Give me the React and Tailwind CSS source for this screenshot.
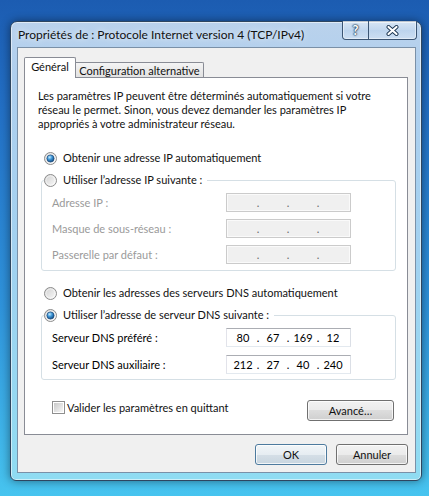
import React from "react";

const F = "font-['Lato','Noto_Sans',sans-serif]";

function Radio({ checked }) {
  return (
    <svg width="13" height="13" viewBox="0 0 13 13" className="shrink-0">
      <defs>
        <linearGradient id="rbg" x1="0" y1="0" x2="1" y2="1">
          <stop offset="0" stopColor="#cfcfcf" />
          <stop offset="1" stopColor="#fbfbfb" />
        </linearGradient>
        <radialGradient id="rdot" cx="0.38" cy="0.32" r="0.75">
          <stop offset="0" stopColor="#c4ecff" />
          <stop offset="0.45" stopColor="#3c94d6" />
          <stop offset="1" stopColor="#0f3f72" />
        </radialGradient>
      </defs>
      <circle cx="6.5" cy="6.5" r="6" fill="url(#rbg)" stroke="#8c8c8c" strokeWidth="1" />
      <circle cx="6.5" cy="6.5" r="4.6" fill="none" stroke="#ffffff" strokeOpacity="0.55" strokeWidth="1" />
      {checked && <circle cx="6.5" cy="6.5" r="3.6" fill="url(#rdot)" stroke="#1a4a7c" strokeWidth="0.7" />}
    </svg>
  );
}

function CheckBox() {
  return (
    <div className="h-[13px] w-[13px] shrink-0 border border-[#8f8f8f] bg-white p-px">
      <div className="h-full w-full bg-[linear-gradient(135deg,#c9c9c9,#f7f7f7)]" />
    </div>
  );
}

function IpField({ values, disabled }) {
  return (
    <div
      className={`flex h-[19px] w-[125px] shrink-0 items-center border pl-[2px] ${
        disabled
          ? "border-[#cbcbcb] bg-[#f0f0f0] text-[#6a6a6a] shadow-[inset_0_0_0_1px_#fafafa]"
          : "border-[#abadb3] border-b-[#e3e9ef] border-l-[#e2e3ea] border-r-[#dbdfe6] bg-white text-black"
      }`}
    >
      {[0, 1, 2, 3].map((i) => (
        <React.Fragment key={i}>
          {i > 0 && <span className="flex w-[2px] justify-center">.</span>}
          <span className="w-[28px] text-center">{values ? values[i] : ""}</span>
        </React.Fragment>
      ))}
    </div>
  );
}

function FieldRow({ label, values, disabled }) {
  return (
    <div className="flex h-[19px] items-center">
      <div className={`w-[174px] ${disabled ? "text-[#9a9a9a]" : "text-black"}`}>{label}</div>
      <IpField values={values} disabled={disabled} />
    </div>
  );
}

function Button({ children, def, w }) {
  return (
    <div
      className={`flex h-[21px] items-center justify-center rounded-[3px] border ${w} ${
        def
          ? "border-[#4d7a9e] bg-[linear-gradient(to_bottom,#f1f5f8_0%,#e6edf2_50%,#d5dfe7_50%,#c8d5df_100%)]"
          : "border-[#707070] bg-[linear-gradient(to_bottom,#f2f2f2_0%,#ebebeb_50%,#dddddd_50%,#cfcfcf_100%)]"
      } shadow-[inset_0_0_0_1px_rgba(255,255,255,0.75)]`}
    >
      {children}
    </div>
  );
}

export default function App() {
  return (
    <div
      className={`h-[496px] w-[429px] overflow-hidden bg-[linear-gradient(to_bottom,#1c5cb1_0%,#2370c5_22%,#2f93db_62%,#47c4ef_100%)] pl-[10px] pt-[21px] text-[11px] leading-[14px] text-[#111] ${F}`}
    >
      <div className="flex h-[460px] w-[412px] flex-col rounded-b-[6px] rounded-t-[7px] border border-[#2e4660] bg-[linear-gradient(to_bottom,#bad2ec_0%,#afcfee_12%,#a2d1f0_50%,#8fdcf2_100%)] shadow-[0_0_10px_rgba(0,0,0,0.45),inset_0_0_0_1px_rgba(255,255,255,0.55)]">
        {/* title bar */}
        <div className="flex h-[25px] items-start pl-[7px] pr-[4px]">
          <div className="mt-[5px] flex-1 whitespace-nowrap text-[12px] leading-[16px] [text-shadow:0_0_6px_rgba(255,255,255,0.9)]">
            Propriétés de : Protocole Internet version 4 (TCP/IPv4)
          </div>
          <div className="-mt-px flex h-[19px] overflow-hidden rounded-b-[4px] border border-t-0 border-[#3b5573] shadow-[inset_0_0_0_1px_rgba(255,255,255,0.45)]">
            <div className="flex w-[26px] items-center justify-center border-r border-[#3b5573] bg-[linear-gradient(to_bottom,rgba(255,255,255,0.45),rgba(255,255,255,0.15)_50%,rgba(255,255,255,0.05)_50%,rgba(255,255,255,0.3))] text-[13px] font-bold leading-none text-white [text-shadow:0_0_1px_#1b3550,0_0_2px_#1b3550,0_0_2px_#1b3550]">
              ?
            </div>
            <div className="flex w-[47px] items-center justify-center bg-[linear-gradient(to_bottom,rgba(255,255,255,0.45),rgba(255,255,255,0.15)_50%,rgba(255,255,255,0.05)_50%,rgba(255,255,255,0.3))]">
              <svg width="13" height="11" viewBox="0 0 13 11">
                <path d="M2.5 2 L10.5 9 M10.5 2 L2.5 9" stroke="#1b3550" strokeWidth="4" strokeLinecap="round" />
                <path d="M2.5 2 L10.5 9 M10.5 2 L2.5 9" stroke="#ffffff" strokeWidth="2.2" strokeLinecap="round" />
              </svg>
            </div>
          </div>
        </div>

        {/* client area */}
        <div className="ml-[6px] mr-[5px] flex h-[426px] flex-col border border-[#7a90a7] bg-[#f0f0f0] pl-[6px] pr-[7px] pt-[9px]">
          {/* tabs */}
          <div className="flex items-end">
            <div className="relative z-10 -mb-px flex h-[21px] w-[52px] items-center justify-center whitespace-nowrap rounded-t-[2px] border border-b-0 border-[#898c95] bg-white pb-[2px]">
              Général
            </div>
            <div className="flex h-[15px] w-[128px] items-center justify-center whitespace-nowrap rounded-tr-[2px] border border-b-0 border-l-0 border-[#898c95] bg-[linear-gradient(to_bottom,#f4f4f4,#e2e2e2)] pt-[1px]">
              Configuration alternative
            </div>
          </div>

          {/* panel */}
          <div className="flex h-[358px] w-[384px] flex-col border border-[#898c95] bg-white">
            <p className="ml-[13px] mt-[11px] whitespace-nowrap leading-[14px]">
              Les paramètres IP peuvent être déterminés automatiquement si votre
              <br />
              réseau le permet. Sinon, vous devez demander les paramètres IP
              <br />
              appropriés à votre administrateur réseau.
            </p>

            <div className="ml-[19px] mt-[19px] flex h-[16px] items-center gap-[6px]">
              <Radio checked />
              <span>Obtenir une adresse IP automatiquement</span>
            </div>

            <fieldset className="ml-[16px] mt-[6px] w-[355px] rounded-[3px] border border-[#d5dfe5] p-0">
              <legend className="ml-[2px] flex h-[16px] items-center gap-[6px] pr-[5px]">
                <Radio />
                <span>Utiliser l’adresse IP suivante :</span>
              </legend>
              <div className="flex flex-col gap-[7px] pb-[6px] pl-[10px] pt-[5px]">
                <FieldRow label="Adresse IP :" disabled />
                <FieldRow label="Masque de sous-réseau :" disabled />
                <FieldRow label="Passerelle par défaut :" disabled />
              </div>
            </fieldset>

            <div className="ml-[19px] mt-[14px] flex h-[16px] items-center gap-[6px]">
              <Radio />
              <span>Obtenir les adresses des serveurs DNS automatiquement</span>
            </div>

            <fieldset className="ml-[16px] mt-[6px] w-[355px] rounded-[3px] border border-[#d5dfe5] p-0">
              <legend className="ml-[2px] flex h-[16px] items-center gap-[6px] pr-[5px]">
                <Radio checked />
                <span>Utiliser l’adresse de serveur DNS suivante :</span>
              </legend>
              <div className="flex flex-col gap-[8px] pb-[5px] pl-[10px] pt-[5px]">
                <FieldRow label="Serveur DNS préféré :" values={["80", "67", "169", "12"]} />
                <FieldRow label="Serveur DNS auxiliaire :" values={["212", "27", "40", "240"]} />
              </div>
            </fieldset>

            <div className="ml-[27px] mr-[13px] mt-[20px] flex items-start justify-between">
              <div className="flex h-[15px] items-center gap-[2px]">
                <CheckBox />
                <span>Valider les paramètres en quittant</span>
              </div>
              <Button w="w-[87px]">Avancé…</Button>
            </div>
          </div>

          {/* bottom buttons */}
          <div className="mt-[9px] flex justify-end gap-[9px]">
            <Button def w="w-[72px]">OK</Button>
            <Button w="w-[72px]">Annuler</Button>
          </div>
        </div>
      </div>
    </div>
  );
}
